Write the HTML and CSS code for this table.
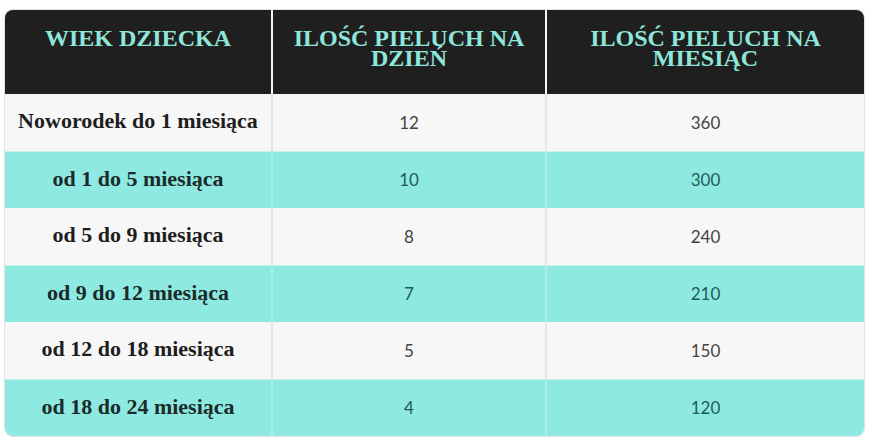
FILE: index.html
```html
<!DOCTYPE html>
<html lang="pl">
<head>
<meta charset="utf-8">
<link rel="stylesheet" href="styles.css">
</head>
<body>
<div class="wrap">
<table class="tbl">
<colgroup><col class="c1"><col class="c2"><col class="c3"></colgroup>
<thead>
<tr><th>WIEK DZIECKA</th><th>ILOŚĆ PIELUCH NA DZIEŃ</th><th>ILOŚĆ PIELUCH NA MIESIĄC</th></tr>
</thead>
<tbody>
<tr class="light"><td class="age">Noworodek do 1 miesiąca</td><td>12</td><td>360</td></tr>
<tr class="teal"><td class="age">od 1 do 5 miesiąca</td><td>10</td><td>300</td></tr>
<tr class="light"><td class="age">od 5 do 9 miesiąca</td><td>8</td><td>240</td></tr>
<tr class="teal"><td class="age">od 9 do 12 miesiąca</td><td>7</td><td>210</td></tr>
<tr class="light"><td class="age">od 12 do 18 miesiąca</td><td>5</td><td>150</td></tr>
<tr class="teal"><td class="age">od 18 do 24 miesiąca</td><td>4</td><td>120</td></tr>
</tbody>
</table>
</div>
</body>
</html>
```
FILE: styles.css
```css
html, body { margin: 0; background: #fff; }
body { padding: 9px 5px 10px 4px; }
.wrap {
  width: 861px;
  border: 1px solid #e2e2e2;
  border-radius: 9px;
  overflow: hidden;
  box-sizing: border-box;
}
.tbl {
  width: 100%;
  border-collapse: collapse;
  table-layout: fixed;
}
.c1 { width: 267px; }
.c2 { width: 274px; }
.c3 { width: auto; }
th {
  background: #1f1f1f;
  color: #8fe6da;
  font-family: "Liberation Serif", "DejaVu Serif", serif;
  font-weight: 700;
  font-size: 24px;
  line-height: 20px;
  height: 84px;
  box-sizing: border-box;
  vertical-align: top;
  padding: 18px 16px 0;
  text-align: center;
  border-right: 2px solid #f4f4f4;
}
th:last-child, td:last-child { border-right: none; }
td {
  height: 57px;
  box-sizing: border-box;
  padding: 0 4px;
  text-align: center;
  font-family: Lato, "Open Sans", sans-serif;
  font-size: 17px;
  color: #444;
  border-right: 2px solid #e6e6e6;
}
td.age {
  font-family: "Liberation Serif", "DejaVu Serif", serif;
  font-weight: 700;
  font-size: 22px;
  color: #1e1e1e;
  padding-bottom: 2px;
}
.light td { background: #f7f7f7; }
.teal td { background: #8eeae0; color: #1f5c57; border-right-color: #a9efe8; }
.teal td.age { color: #1b2a2a; }
.teal td { border-top: 1px solid #c6f1ec; }
```
